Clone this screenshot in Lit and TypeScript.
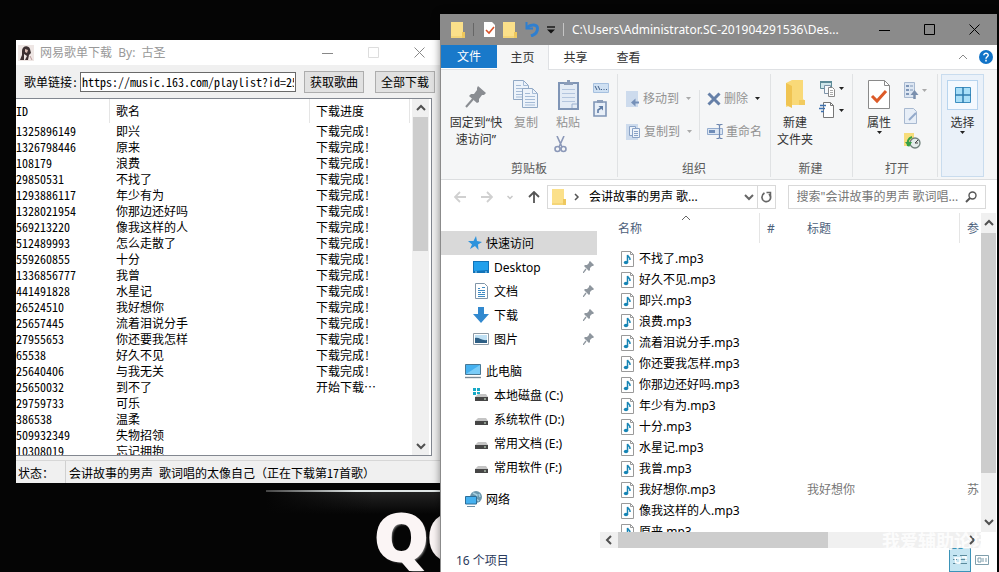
import { LitElement, html, css, svg, nothing } from "lit";
import { customElement } from "lit/decorators.js";
import { classMap } from "lit/directives/class-map.js";

const icon = (w: number, h: number, body: unknown) =>
  html`<svg width=${w} height=${h} viewBox="0 0 ${w} ${h}" fill="none" aria-hidden="true">${body}</svg>`;

const folder = () =>
  icon(14, 17, svg`<path d="M0 1H12V11L14 12V17H0Z" fill="#fbe08a"/><path d="M11 11h3v6h-3z" fill="#eec75c"/><path d="M0 16h14" stroke="#eecb66"/>`);
const folderBig = () =>
  icon(20, 28, svg`<path d="M1 3L7 0H18V19L20 21V25H7L1 27Z" fill="#f9d978"/><path d="M1 3L7 6V28L1 25Z" fill="#f0c452"/><path d="M14 20h6v5h-6z" fill="#f2cb60"/>`);
const checkDoc = () =>
  icon(11, 15, svg`<path d="M0 0H8L11 3V15H0Z" fill="#fff"/><path d="M2 8l3 3 5-6" stroke="#d9542b" stroke-width="1.600"/>`);
const undo = () =>
  icon(14, 15, svg`<path d="M1.500 0V6.500H8" stroke="#2f7fd0" stroke-width="2"/><path d="M2 5.500C6 2 12.500 2 12.500 6.500C12.500 11 9 13 6 14" stroke="#2f7fd0" stroke-width="3"/>`);
const customize = () =>
  icon(8, 8, svg`<path d="M0 1h8" stroke="#111" stroke-width="1.4"/><path d="M0 3.500H8L4 7.500Z" fill="#111"/>`);
const caret = (color = "#222") => icon(5, 3, svg`<path d="M0 0H5L2.500 3Z" fill=${color}/>`);
const minimize = () => icon(11, 11, svg`<path d="M0 6.500H11" stroke="currentColor"/>`);
const maximize = () => icon(11, 11, svg`<path d="M.5.500H10.500V10.500H.5Z" stroke="currentColor"/>`);
const closeX = () => icon(11, 11, svg`<path d="M.5.500L10.500 10.500M10.500.500L.5 10.500" stroke="currentColor"/>`);
const chevron = (dir: "up" | "down" | "left" | "right", color = "#505050", width = 2) => {
  const d = { up: "M1 7L5 3L9 7", down: "M1 3L5 7L9 3", left: "M7 1L3 5L7 9", right: "M3 1L7 5L3 9" }[dir];
  return icon(10, 10, svg`<path d=${d} stroke=${color} stroke-width=${width}/>`);
};
const smallChevron = (d: string, color: string) => icon(6, 8, svg`<path d=${d} stroke=${color} stroke-width="1.500"/>`);
const help = () =>
  icon(14, 14, svg`<circle cx="7" cy="7" r="7" fill="#1173c7"/><path d="M4.800 5.300C4.800 2.500 9.300 2.600 9.200 5.200C9.200 6.800 7 6.800 7 8.700M7 9.800V11.400" stroke="#fff" stroke-width="1.500"/>`);
const pinBig = () =>
  icon(22, 24, svg`<path d="M13 2L21 9L19 11L17 11L14 15L14 18L12 19L4 12L6 10L9 10L12 6L12 4Z" fill="#8a8d92"/><path d="M8 15L1 23" stroke="#8a8d92" stroke-width="2"/>`);
const pinSmall = () =>
  icon(11, 12, svg`<path d="M7 0L11 4L10 5H9L7 7V9L6 10L1 5L2 4H4L6 2V1Z" fill="#8e969e"/><path d="M3 8L0 12" stroke="#8e969e" stroke-width="1.300"/>`);
const page = (x: number, y: number) => svg`
  <path d="M${x + 0.5} ${y + 0.5}H${x + 10.5}L${x + 15.5} ${y + 5.5}V${y + 19.5}H${x + 0.5}Z" fill="#edf3fa" stroke="#91a8c4"/>
  <path d="M${x + 10.5} ${y + 0.5}V${y + 5.5}H${x + 15.5}M${x + 3} ${y + 5.5}h5M${x + 3} ${y + 8.5}h10M${x + 3} ${y + 11.5}h10M${x + 3} ${y + 14.5}h10M${x + 3} ${y + 17}h10" stroke="#a5bbd6"/>`;
const copyBig = () => icon(26, 28, svg`${page(0, 0)}${page(9, 8)}`);
const pasteBig = () =>
  icon(21, 30, svg`<path d="M1 3H20V29H1Z" fill="#e3ebf5" stroke="#7f95b6" stroke-width="2"/><path d="M6 5V2H9V0H12V2H15V5Z" fill="#8b9db9"/><path d="M4 9.500h13M4 13.500h13M4 17.500h13M4 21.500h13" stroke="#b3c5de"/><path d="M14 28v-4h5" stroke="#9db2d0"/>`);
const scissors = () =>
  icon(13, 17, svg`<path d="M3 0L8 11M10 0L5 11" stroke="#8b98b8" stroke-width="1.600"/><circle cx="3.500" cy="13" r="2.500" stroke="#8b98b8" stroke-width="1.600"/><circle cx="9.500" cy="13" r="2.500" stroke="#8b98b8" stroke-width="1.600"/>`);
const copyPath = () =>
  icon(16, 10, svg`<path d="M.5.500H15.500V9.500H.5Z" fill="#cfe0f2" stroke="#a6c0df"/><path d="M2 3l2 4M5 3l2 4M8 6.500h1M10.500 6.500h1M13 6.500h1" stroke="#3f5f88"/>`);
const pasteShortcut = () =>
  icon(14, 17, svg`<path d="M1 2H13V16H1Z" fill="#e8eff8" stroke="#7f95b6" stroke-width="1.600"/><path d="M4 0h6v3H4z" fill="#8b9db9"/><path d="M5 13V10L8 8" stroke="#5f7ca5" stroke-width="1.600"/><path d="M5.500 6H10V10.500Z" fill="#5f7ca5"/>`);
const moveTo = () =>
  icon(14, 16, svg`<path d="M0 0H12V16H0Z" fill="#cddbed"/><path d="M13 11.500H8" stroke="#7590b8" stroke-width="2"/><path d="M5 11.500L9.500 7.500V15.500Z" fill="#7590b8"/>`);
const copyTo = () =>
  icon(15, 16, svg`<path d="M0 0H12V16H0Z" fill="#cddbed"/><path d="M3.500 2.500h6v9h-6z" fill="#eef3fa" stroke="#89a2c6"/><path d="M6.500 4.500h7v9h-7z" fill="#eef3fa" stroke="#89a2c6"/><path d="M8 7.500h4M8 9.500h4M8 11.500h4" stroke="#89a2c6"/>`);
const deleteX = () => icon(14, 14, svg`<path d="M1.500 1.500L12.500 12.500M12.500 1.500L1.500 12.500" stroke="#6680a8" stroke-width="3"/>`);
const rename = () =>
  icon(16, 15, svg`<path d="M.5 4.500H15.500V10.500H.5Z" fill="#dce6f3" stroke="#93abcd"/><path d="M2 7.500h6" stroke="#6f8db8" stroke-width="3"/><path d="M12.500 1V14M9.500.500h2l1 1l1-1h2M9.500 14.500h2l1-1l1 1h2" stroke="#6f88b0" stroke-width="1.200"/>`);
const newItem = () =>
  icon(17, 17, svg`<path d="M1.500 1.500h11v7h-11z" fill="#cfe6ea" stroke="#5d8b98"/><path d="M1 2h12" stroke="#5d8b98" stroke-width="2"/><path d="M5.500 5.500h6v8h-6z" fill="#f5f8fb" stroke="#7d93a8"/><path d="M9.500 7.500h4l2 2v7h-6z" fill="#fff" stroke="#888"/><path d="M11 10.500h3M11 12.500h3M11 14.500h3" stroke="#aaa"/>`);
const easyAccess = () =>
  icon(17, 17, svg`<path d="M4.500.500H11.500L14.500 3.500V15.500H4.500Z" fill="#fff" stroke="#777"/><path d="M11.500.500V3.500H14.500" stroke="#777"/><path d="M1 3.500H7M0 6.500H6M2 9.500H5" stroke="#3e72b0" stroke-width="1.300"/>`);
const propertiesIcon = () =>
  icon(22, 29, svg`<path d="M.5.500H16.500L21.500 5.500V28.500H.5Z" fill="#fff" stroke="#8a8a8a"/><path d="M16.500.500V5.500H21.500" stroke="#8a8a8a"/><path d="M4 16l5 5L18 11" stroke="#dc5a28" stroke-width="3"/>`);
const openWith = () =>
  icon(15, 17, svg`<path d="M.5.500H10.500V15.500H.5Z" fill="#dde6f2" stroke="#a8b9d0"/><path d="M2 3h3v2H2zM2 7h3v2H2zM2 11h3v2H2z" fill="#7f97b8"/><path d="M6 4h3M6 8h3" stroke="#7f97b8"/><path d="M10.500 17V12" stroke="#7b90ae" stroke-width="2.500"/><path d="M6.500 13L10.500 8L14.500 13Z" fill="#7b90ae"/>`);
const editDoc = () =>
  icon(14, 16, svg`<path d="M.5.500H9.500L12.500 3.500V15.500H.5Z" fill="#e7eef7" stroke="#a8b9d0"/><path d="M5 12L12 5" stroke="#93a9ca" stroke-width="2"/>`);
const historyIcon = () =>
  icon(17, 16, svg`<path d="M0 0H10V13H0Z" fill="#f7dd7b"/><circle cx="11" cy="10" r="5" fill="#e4ecea" stroke="#70807c" stroke-width="1.300"/><path d="M11 10l3-3M11 10h3" stroke="#444"/><path d="M8 4C4 5 3 9 4 13" stroke="#36a046" stroke-width="2"/><path d="M1 9L8 9L5 14Z" fill="#36a046"/>`);
const selectIcon = () =>
  icon(16, 16, svg`<path d="M.5.500h15v15H.5z" fill="#a9dff8" stroke="#3e8fc0"/><path d="M8 0V16M0 8H16" stroke="#2f7daf" stroke-width="1.500"/>`);
const arrow = (d: string, color: string) => icon(12, 12, svg`<path d=${d} stroke=${color} stroke-width="1.800"/>`);
const refresh = () =>
  icon(11, 12, svg`<path d="M3.500 2C0 4 0 9 4 10.500C8.500 11.500 11.500 7 8 3" stroke="#666" stroke-width="1.700"/><path d="M5.500 1.500H9.500V5.500" stroke="#666" stroke-width="1.500"/>`);
const magnifier = () =>
  icon(12, 12, svg`<circle cx="7.500" cy="4.500" r="3.500" stroke="#555" stroke-width="1.400"/><path d="M5 7L1 11" stroke="#555" stroke-width="2"/>`);
const star = () => icon(14, 14, svg`<path d="M8 0L9 5L14 6L10 8.500L10.500 14L7 10L2 13L4 8.500L0 5H5.500Z" fill="#2d93dc"/>`);
const desktopIcon = () =>
  icon(16, 12, svg`<path d="M0 0H16V12H0Z" fill="#1173b8"/><path d="M1 1H15V9L1 10Z" fill="#22a0ec"/><path d="M2 11h2M12 11h2" stroke="#9fd6f7"/>`);
const docIcon = () =>
  icon(16, 16, svg`<path d="M2.500.500H11.500L14.500 3.500V15.500H2.500Z" fill="#fff" stroke="#8095a8"/><path d="M5 5.500h2M9 4.500h3M5 7.500h7M5 9.500h3M9 9.500h3M5 11.500h7M5 13.500h7" stroke="#3f8bc4"/>`);
const downIcon = () => icon(16, 16, svg`<path d="M5 0H11V7H16L8 16L0 7H5Z" fill="#3289cf"/>`);
const pictureIcon = () =>
  icon(16, 12, svg`<path d="M.5.500h15v11H.5z" fill="#fff" stroke="#8e9ba6"/><path d="M2 2h12v8H2z" fill="#bfe0f4"/><path d="M2 5C6 4 9 8 14 7V10H2Z" fill="#2e5f85"/>`);
const pcIcon = () =>
  icon(16, 15, svg`<path d="M.5.500h15v10H.5z" fill="#45b1f0" stroke="#4a7894"/><path d="M1 10L15 1V10Z" fill="#7accf8"/><path d="M0 13.500H16" stroke="#7a8a96" stroke-width="1.400"/>`);
const driveIcon = (os = false) =>
  icon(16, 14, svg`${os ? svg`<path d="M0 0h3v3H0zM4 0h3v3H4zM0 4h3v3H0zM4 4h3v2H4z" fill="#17a9c6"/>` : nothing}<path d="M5 6H13L15 9H2Z" fill="#c4c4c4"/><path d="M2 9H15V13H2Z" fill="#464646"/><path d="M11 11h2" stroke="#d6efd6"/>`);
const networkIcon = () =>
  icon(17, 16, svg`<circle cx="11" cy="6" r="6" fill="#6a96ac"/><path d="M8 2l4 2l-1 4l3 2M14 3l1 3" stroke="#a7cfe0" stroke-width="1.500"/><path d="M.5 5.500H11.500V13H.5Z" fill="#45b1f0" stroke="#2d6d97"/><path d="M2 15.500h8" stroke="#6c8ea4"/>`);
const musicFile = () =>
  icon(13, 16, svg`<path d="M.5.500H9.500L12.500 3.500V15.500H.5Z" fill="#fff" stroke="#9a9a9a"/><path d="M9.500.500V3.500H12.500" stroke="#9a9a9a"/><ellipse cx="5" cy="11.500" rx="2.200" ry="1.700" fill="#1785b5"/><path d="M6.500 11.500V4C7 6 9.500 6 9 9" stroke="#1785b5" stroke-width="1.500"/>`);
const portrait = () =>
  icon(16, 16, svg`<path d="M0 0H16V16H0Z" fill="#eee6e4"/><path d="M4 6C4 0 11 0 12 4L13 8L11 10L10 15H7L9 11L6 9L6 15H2L4 10Z" fill="#3c3032"/><path d="M7 4L10 5L9 8L7 7Z" fill="#d9bdb5"/><path d="M12 11l2 4" stroke="#b99"/>`);
const detailsView = () =>
  icon(18, 14, svg`<path d="M2 2.500h4M2 6.500h4M2 10.500h4M9 2.500h7M9 6.500h7M9 10.500h7" stroke="#5b8a9d"/><path d="M4 5h5v5H5zM11 4h4v4" stroke="#fff" stroke-width="1.500"/>`);
const tilesView = () =>
  icon(14, 10, svg`<path d="M.5.500h13v9H.5z" stroke="#7f9eac"/><path d="M3 3h3v4H3zM8 3v4M11 3v4" stroke="#7f9eac"/>`);

const songs: [string, string, string][] = [
  ["1325896149", "即兴", "下载完成!"],
  ["1326798446", "原来", "下载完成!"],
  ["108179", "浪费", "下载完成!"],
  ["29850531", "不找了", "下载完成!"],
  ["1293886117", "年少有为", "下载完成!"],
  ["1328021954", "你那边还好吗", "下载完成!"],
  ["569213220", "像我这样的人", "下载完成!"],
  ["512489993", "怎么走散了", "下载完成!"],
  ["559260855", "十分", "下载完成!"],
  ["1336856777", "我曾", "下载完成!"],
  ["441491828", "水星记", "下载完成!"],
  ["26524510", "我好想你", "下载完成!"],
  ["25657445", "流着泪说分手", "下载完成!"],
  ["27955653", "你还要我怎样", "下载完成!"],
  ["65538", "好久不见", "下载完成!"],
  ["25640406", "与我无关", "下载完成!"],
  ["25650032", "到不了", "开始下载…"],
  ["29759733", "可乐", ""],
  ["386538", "温柔", ""],
  ["509932349", "失物招领", ""],
  ["10308019", "忘记拥抱", ""],
];

const files: [string, string, string][] = [
  ["不找了.mp3", "", ""],
  ["好久不见.mp3", "", ""],
  ["即兴.mp3", "", ""],
  ["浪费.mp3", "", ""],
  ["流着泪说分手.mp3", "", ""],
  ["你还要我怎样.mp3", "", ""],
  ["你那边还好吗.mp3", "", ""],
  ["年少有为.mp3", "", ""],
  ["十分.mp3", "", ""],
  ["水星记.mp3", "", ""],
  ["我曾.mp3", "", ""],
  ["我好想你.mp3", "我好想你", "苏"],
  ["像我这样的人.mp3", "", ""],
  ["原来.mp3", "", ""],
];

const base = css`
  * {
    box-sizing: border-box;
  }
  button {
    font: inherit;
    color: inherit;
    background: none;
    border: 0;
    padding: 0;
    margin: 0;
    display: flex;
    align-items: center;
    justify-content: center;
    white-space: nowrap;
  }
  input {
    font: inherit;
    margin: 0;
    min-width: 0;
  }
  svg {
    display: block;
    flex: none;
  }
  table {
    border-collapse: separate;
    border-spacing: 0;
    table-layout: fixed;
  }
  th,
  td {
    padding: 0;
    font-weight: 400;
    text-align: left;
    white-space: nowrap;
    overflow: hidden;
  }
`;

@customElement("playlist-window")
export class PlaylistWindow extends LitElement {
  static styles = [
    base,
    css`
      :host {
        display: flex;
        flex-direction: column;
        background: #f0f0f0;
        color: #000;
        font: 12px/16px "Noto Sans Mono CJK SC", "Noto Sans CJK SC", "Liberation Mono", monospace;
      }
      .title {
        display: flex;
        align-items: center;
        height: 25px;
        padding-left: 2px;
        background: #fff;
        color: #999;
        font-family: "Noto Sans", "Noto Sans CJK SC", sans-serif;
      }
      .title span {
        flex: 1;
        padding-left: 6px;
        white-space: pre;
      }
      .title button {
        width: 46px;
        height: 24px;
        color: #888;
      }
      .title .off {
        color: #ddd;
      }
      .form {
        display: flex;
        align-items: center;
        height: 33px;
        padding: 0 7px 0 8px;
      }
      .form input {
        flex: 1;
        height: 20px;
        margin-left: 2px;
        padding: 0 1px;
        border: 1px solid #6a6a6a;
        background: #fff;
      }
      .form button {
        width: 60px;
        height: 22px;
        margin-left: 8px;
        border: 1px solid #adadad;
        background: #e1e1e1;
      }
      .form button + button {
        margin-left: 11px;
      }
      .list {
        flex: 1;
        min-height: 0;
        display: flex;
        margin-right: 10px;
        border: solid #828790;
        border-width: 1px 1px 1px 0;
        background: #fff;
        overflow: hidden;
      }
      .rows {
        flex: 1;
        overflow: hidden;
      }
      .id {
        width: 94px;
      }
      .name {
        width: 200px;
      }
      .state {
        width: 100px;
      }
      th {
        height: 24px;
        border-right: 1px solid #e5e5e5;
      }
      td {
        height: 16px;
      }
      th + th,
      td + td {
        padding-left: 6px;
      }
      .scroll {
        width: 17px;
        display: flex;
        flex-direction: column;
        background: #f0f0f0;
        margin-right: 2px;
      }
      .scroll button {
        height: 18px;
      }
      .track {
        flex: 1;
      }
      .thumb {
        height: 42%;
        margin: 0 1px;
        background: #cdcdcd;
      }
      .status {
        display: flex;
        height: 23px;
        margin-top: 4px;
        border-top: 1px solid #d7d7d7;
        line-height: 23px;
        white-space: pre;
      }
      .status span:first-child {
        width: 50px;
        padding-left: 2px;
        border-right: 1px solid #d0d0d0;
      }
      .status span:last-child {
        padding-left: 3px;
      }
    `,
  ];

  render() {
    return html`
      <div class="title">
        ${portrait()}<span>网易歌单下载  By:  古圣</span>
        <button aria-label="最小化">${minimize()}</button>
        <button class="off" aria-label="最大化" disabled>${maximize()}</button>
        <button aria-label="关闭">${closeX()}</button>
      </div>
      <div class="form">
        <label for="url">歌单链接:</label>
        <input id="url" .value=${"https://music.163.com/playlist?id=2585"} />
        <button>获取歌曲</button>
        <button>全部下载</button>
      </div>
      <div class="list">
        <div class="rows">
          <table>
            <colgroup><col class="id" /><col class="name" /><col class="state" /></colgroup>
            <thead><tr><th>ID</th><th>歌名</th><th>下载进度</th></tr></thead>
            <tbody>
              ${songs.map((s) => html`<tr>${s.map((v) => html`<td>${v}</td>`)}</tr>`)}
            </tbody>
          </table>
        </div>
        <div class="scroll">
          <button aria-label="向上滚动">${chevron("up")}</button>
          <div class="track"><div class="thumb"></div></div>
          <button aria-label="向下滚动">${chevron("down")}</button>
        </div>
      </div>
      <div class="status"><span>状态：</span><span>会讲故事的男声 歌词唱的太像自己（正在下载第17首歌）</span></div>
    `;
  }
}

@customElement("explorer-window")
export class ExplorerWindow extends LitElement {
  static styles = [
    base,
    css`
      :host {
        display: flex;
        flex-direction: column;
        background: #fff;
        color: #1a1a1a;
        border-left: 1px solid #8b8b8b;
        box-shadow: 0 0 8px rgba(0, 0, 0, 0.45);
        font: 12px/17px "Noto Sans", "Noto Sans CJK SC", sans-serif;
        overflow: hidden;
      }
      a {
        color: inherit;
        text-decoration: none;
      }
      .title {
        display: flex;
        align-items: center;
        gap: 8px;
        height: 31px;
        flex: none;
        padding-left: 10px;
        background: #8b8b8b;
        color: #fff;
      }
      .bar {
        width: 1px;
        height: 13px;
        background: #c5c5c5;
      }
      .bar.dark {
        margin-right: 2px;
        background: #666;
      }
      .title .path {
        flex: 1;
        min-width: 0;
        white-space: nowrap;
      }
      .sys {
        display: flex;
        color: #000;
      }
      .sys button {
        width: 45px;
        height: 30px;
      }
      .tabs {
        display: flex;
        height: 25px;
        flex: none;
        border-bottom: 1px solid #dfe1e4;
      }
      .tabs button {
        width: 53px;
        color: #333;
      }
      .tabs .file {
        width: 56px;
        height: 23px;
        background: #1979ca;
        color: #fff;
      }
      .tabs .home {
        width: 52px;
        height: 25px;
        background: #f5f6f7;
        border-right: 1px solid #dfe1e4;
      }
      .tabs .right {
        margin-left: auto;
        display: flex;
        align-items: center;
        gap: 11px;
        padding-right: 4px;
      }
      .tabs .right button {
        width: auto;
      }
      .ribbon {
        display: flex;
        flex: none;
        height: 110px;
        background: #f5f6f7;
        border-bottom: 1px solid #dcdee0;
        color: #444;
      }
      .group {
        display: flex;
        flex-direction: column;
        justify-content: space-between;
        margin: 4px 0 2px;
        padding: 6px 8px 0;
        border-right: 1px solid #e0e2e4;
      }
      .group footer {
        text-align: center;
        color: #5a5a5a;
      }
      .tools {
        display: flex;
      }
      .big {
        flex-direction: column;
        justify-content: flex-start;
        color: #333;
        white-space: pre-line;
      }
      .big .pic {
        height: 34px;
        display: flex;
        align-items: flex-start;
      }
      .big.off,
      .line.off {
        color: #929292;
      }
      .clip .tools {
        gap: 14px;
      }
      .clip .big {
        width: 28px;
      }
      .clip .wide {
        width: 54px;
        margin-right: -5px;
      }
      .wide .pic {
        padding-top: 4px;
      }
      .stack {
        display: flex;
        flex-direction: column;
        align-items: flex-start;
      }
      .clip .stack {
        gap: 5px;
      }
      .clip .side {
        padding-top: 3px;
        gap: 7px;
        margin-left: -3px;
      }
      .org .tools {
        padding-top: 10px;
      }
      .org .stack {
        gap: 16px;
      }
      .org .stack + .stack {
        border-left: 1px solid #e0e2e4;
        margin-left: 7px;
        padding-left: 7px;
      }
      .line {
        gap: 3px;
      }
      .line .drop {
        margin-left: 4px;
      }
      .make .tools {
        gap: 6px;
      }
      .make .big {
        width: 36px;
      }
      .group.make {
        padding-left: 6px;
        padding-right: 8px;
      }
      .small {
        gap: 3px;
      }
      .make .stack {
        gap: 5px;
      }
      .group.open {
        padding-left: 14px;
        padding-right: 10px;
      }
      .open .tools {
        gap: 13px;
      }
      .open .big {
        width: 24px;
      }
      .open .stack {
        gap: 9px;
        padding-top: 2px;
      }
      .pick {
        width: 43px;
        margin: 4px 0 2px 3px;
        padding-top: 5px;
        border: 1px solid #c9dcee;
        background: #eaf1f9;
      }
      .pick .pic {
        height: 30px;
        width: 31px;
        margin-bottom: 4px;
        align-items: center;
        justify-content: center;
        border: 1px solid #b7d4ee;
        background: #f4f9fe;
      }
      .nav {
        display: flex;
        align-items: center;
        flex: none;
        height: 33px;
        padding: 0 11px 0 13px;
      }
      .nav .arrows {
        display: flex;
        align-items: center;
        justify-content: space-between;
        width: 86px;
        margin-right: 7px;
      }
      .address,
      .search {
        display: flex;
        align-items: center;
        height: 24px;
        min-width: 0;
        border: 1px solid #d9d9d9;
      }
      .address {
        flex: 1 1 228px;
        padding-left: 4px;
        color: #000;
      }
      .address .crumb {
        flex: 1;
        padding-left: 9px;
        white-space: nowrap;
      }
      .address .crumbArrow {
        margin-left: 8px;
      }
      .address .reload {
        width: 18px;
        height: 22px;
        margin-left: 3px;
        border-left: 1px solid #d9d9d9;
      }
      .search {
        flex: 1 1 198px;
        margin-left: 12px;
        padding: 0 8px;
      }
      .search input {
        flex: 1;
        border: 0;
        padding: 0;
        outline: 0;
        background: none;
      }
      .search input::placeholder {
        color: #777;
      }
      .main {
        flex: 1;
        min-height: 0;
        display: flex;
      }
      .tree {
        width: 156px;
        padding-top: 18px;
        margin-right: 3px;
        color: #000;
      }
      .tree a {
        display: flex;
        align-items: center;
        height: 24px;
        padding: 0 3px 0 24px;
      }
      .tree a.child {
        padding-left: 32px;
      }
      .tree a.gap {
        margin-top: 8px;
      }
      .tree a.current {
        background: #d9d9d9;
      }
      .tree .glyph {
        width: 21px;
        flex: none;
      }
      .tree a.current .glyph {
        padding-left: 3px;
      }
      .tree .label {
        flex: 1;
      }
      .content {
        flex: 1;
        min-width: 0;
        display: flex;
        flex-direction: column;
      }
      .pane {
        flex: 1;
        min-height: 0;
        display: flex;
        padding-right: 1px;
      }
      .files {
        flex: 1;
        min-width: 0;
        overflow: hidden;
      }
      .files table {
        width: 100%;
      }
      .cName,
      .cTitle {
        width: 160px;
      }
      .cNum {
        width: 40px;
      }
      th {
        height: 30px;
        padding: 0 0 0 7px;
        color: #4c607a;
        border-right: 1px solid #e5e5e5;
      }
      th.number,
      th:last-child {
        border-right-color: #fff;
      }
      th.first {
        padding-left: 18px;
        position: relative;
      }
      .sort {
        position: absolute;
        top: 0;
        left: 81px;
      }
      .spacer td {
        height: 5px;
      }
      td {
        height: 21px;
        padding: 0 0 0 7px;
        color: #777;
      }
      td.fileName {
        padding-left: 21px;
        color: #000;
      }
      .fileName div {
        display: flex;
        align-items: center;
        gap: 5px;
      }
      .vscroll {
        width: 15px;
        display: flex;
        flex-direction: column;
        background: #f0f0f0;
      }
      .vscroll button {
        height: 20px;
      }
      .vscroll .track {
        flex: 1;
      }
      .vscroll .thumb {
        height: 86%;
        background: #cdcdcd;
      }
      .hscroll {
        display: flex;
        height: 16px;
        flex: none;
        margin-right: 16px;
        background: #f0f0f0;
      }
      .hscroll button {
        width: 18px;
      }
      .hscroll .track {
        flex: 1;
        display: flex;
      }
      .hscroll .thumb {
        width: 61%;
        background: #cdcdcd;
      }
      .status {
        display: flex;
        align-items: center;
        justify-content: flex-end;
        flex: none;
        height: 24px;
        padding: 0 4px 0 15px;
        color: #2a3a5c;
      }
      .status span {
        margin-right: auto;
      }
      .status button {
        width: 22px;
        height: 24px;
      }
      .status .on {
        border: 1px solid #3b93b8;
        background: #c5e5f2;
      }
    `,
  ];

  private treeItem(label: string, glyph: unknown, opts: { child?: boolean; gap?: boolean; current?: boolean; pin?: boolean } = {}) {
    const classes = { child: !!opts.child, gap: !!opts.gap, current: !!opts.current };
    return html`<a href="#" class=${classMap(classes)}
      ><span class="glyph">${glyph}</span><span class="label">${label}</span>${opts.pin ? pinSmall() : nothing}</a
    >`;
  }

  render() {
    return html`
      <header class="title">
        ${folder()}
        <i class="bar dark"></i>
        ${checkDoc()}${folder()}${undo()}${customize()}
        <i class="bar"></i>
        <span class="path">C:\\Users\\Administrator.SC-201904291536\\Des...</span>
        <div class="sys">
          <button aria-label="最小化">${minimize()}</button>
          <button aria-label="最大化">${maximize()}</button>
          <button aria-label="关闭">${closeX()}</button>
        </div>
      </header>
      <div class="tabs">
        <button class="file">文件</button>
        <button class="home">主页</button>
        <button>共享</button>
        <button>查看</button>
        <div class="right">
          <button aria-label="折叠功能区">${chevron("up", "#888", 1)}</button>
          <button aria-label="帮助">${help()}</button>
        </div>
      </div>
      <div class="ribbon">
        <section class="group clip">
          <div class="tools">
            <button class="big wide"><span class="pic">${pinBig()}</span>固定到“快<br />速访问”</button>
            <button class="big off"><span class="pic">${copyBig()}</span>复制</button>
            <div class="stack">
              <button class="big off"><span class="pic">${pasteBig()}</span>粘贴</button>
              <button aria-label="剪切">${scissors()}</button>
            </div>
            <div class="stack side">
              <button aria-label="复制路径">${copyPath()}</button>
              <button aria-label="粘贴快捷方式">${pasteShortcut()}</button>
            </div>
          </div>
          <footer>剪贴板</footer>
        </section>
        <section class="group org">
          <div class="tools">
            <div class="stack">
              <button class="line off">${moveTo()}移动到<span class="drop">${caret("#aaa")}</span></button>
              <button class="line off">${copyTo()}复制到<span class="drop">${caret("#aaa")}</span></button>
            </div>
            <div class="stack">
              <button class="line off">${deleteX()}删除<span class="drop">${caret()}</span></button>
              <button class="line off">${rename()}重命名</button>
            </div>
          </div>
          <footer>组织</footer>
        </section>
        <section class="group make">
          <div class="tools">
            <button class="big"><span class="pic">${folderBig()}</span>新建<br />文件夹</button>
            <div class="stack">
              <button class="small" aria-label="新建项目">${newItem()}${caret()}</button>
              <button class="small" aria-label="轻松访问">${easyAccess()}${caret()}</button>
            </div>
          </div>
          <footer>新建</footer>
        </section>
        <section class="group open">
          <div class="tools">
            <button class="big"><span class="pic">${propertiesIcon()}</span>属性${caret()}</button>
            <div class="stack">
              <button class="small" aria-label="打开">${openWith()}${caret("#aaa")}</button>
              <button aria-label="编辑">${editDoc()}</button>
              <button aria-label="历史记录">${historyIcon()}</button>
            </div>
          </div>
          <footer>打开</footer>
        </section>
        <button class="big pick"><span class="pic">${selectIcon()}</span>选择${caret()}</button>
      </div>
      <nav class="nav">
        <div class="arrows">
          <button aria-label="后退">${arrow("M12 6H1M6 1L1 6L6 11", "#d0d0d0")}</button>
          <button aria-label="前进">${arrow("M0 6H11M6 1L11 6L6 11", "#d0d0d0")}</button>
          <button aria-label="最近浏览的位置">${smallChevron("M.5 3L3 5.500L5.500 3", "#c8c8c8")}</button>
          <button aria-label="向上">${arrow("M6 12V1M1 6L6 1L11 6", "#555")}</button>
        </div>
        <div class="address">
          ${folder()}<span class="crumbArrow">${smallChevron("M1 1L4 4L1 7", "#555")}</span>
          <span class="crumb">会讲故事的男声 歌...</span>
          <button aria-label="以前的位置">${chevron("down", "#666")}</button>
          <button class="reload" aria-label="刷新">${refresh()}</button>
        </div>
        <div class="search">
          <input aria-label="搜索" placeholder='搜索"会讲故事的男声 歌词唱...' />
          ${magnifier()}
        </div>
      </nav>
      <div class="main">
        <div class="tree">
          ${this.treeItem("快速访问", star(), { current: true })}
          ${this.treeItem("Desktop", desktopIcon(), { child: true, pin: true })}
          ${this.treeItem("文档", docIcon(), { child: true, pin: true })}
          ${this.treeItem("下载", downIcon(), { child: true, pin: true })}
          ${this.treeItem("图片", pictureIcon(), { child: true, pin: true })}
          ${this.treeItem("此电脑", pcIcon(), { gap: true })}
          ${this.treeItem("本地磁盘 (C:)", driveIcon(true), { child: true })}
          ${this.treeItem("系统软件 (D:)", driveIcon(), { child: true })}
          ${this.treeItem("常用文档 (E:)", driveIcon(), { child: true })}
          ${this.treeItem("常用软件 (F:)", driveIcon(), { child: true })}
          ${this.treeItem("网络", networkIcon(), { gap: true })}
        </div>
        <div class="content">
          <div class="pane">
            <div class="files">
              <table>
                <colgroup><col class="cName" /><col class="cNum" /><col class="cTitle" /><col /></colgroup>
                <thead>
                  <tr>
                    <th class="first">名称<span class="sort">${chevron("up", "#666", 1)}</span></th>
                    <th class="number">#</th><th>标题</th><th>参</th>
                  </tr>
                </thead>
                <tbody>
                  <tr class="spacer"><td colspan="4"></td></tr>
                  ${files.map(
                    ([name, title, artist]) => html`<tr>
                      <td class="fileName"><div>${musicFile()}${name}</div></td>
                      <td></td><td>${title}</td><td>${artist}</td>
                    </tr>`
                  )}
                </tbody>
              </table>
            </div>
            <div class="vscroll">
              <button aria-label="向上滚动">${chevron("up")}</button>
              <div class="track"><div class="thumb"></div></div>
              <button aria-label="向下滚动">${chevron("down")}</button>
            </div>
          </div>
          <div class="hscroll">
            <button aria-label="向左滚动">${chevron("left")}</button>
            <div class="track"><div class="thumb"></div></div>
            <button aria-label="向右滚动">${chevron("right")}</button>
          </div>
        </div>
      </div>
      <footer class="status">
        <span>16 个项目</span>
        <button class="on" aria-label="详细信息">${detailsView()}</button>
        <button aria-label="大图标">${tilesView()}</button>
      </footer>
    `;
  }
}

@customElement("app-root")
export class AppRoot extends LitElement {
  static styles = css`
    :host {
      display: block;
      position: relative;
      height: 100vh;
      overflow: hidden;
      background: #050505;
    }
    playlist-window {
      position: absolute;
      left: 16px;
      top: 40px;
      bottom: 89px;
      width: 426px;
    }
    explorer-window {
      position: absolute;
      left: 440px;
      right: 2px;
      top: 14px;
      bottom: 0;
    }
    .glow {
      position: absolute;
      left: 266px;
      bottom: 58px;
      width: 180px;
      height: 24px;
      background:
        linear-gradient(90deg, #444, #dfe5e5 50%) top / 100% 2px no-repeat,
        linear-gradient(90deg, #050505, transparent 60%),
        linear-gradient(#262626, #050505);
    }
    .logo {
      position: absolute;
      left: 375px;
      bottom: 8px;
      font: bold 62px/50px "DejaVu Sans", sans-serif;
      color: #fbf5f5;
      -webkit-text-stroke: 3px #fbf5f5;
      text-shadow: 2px 2px 2px #777;
    }
    .watermark {
      position: absolute;
      right: 9px;
      bottom: 21px;
      font: bold 18px/22px "Noto Sans CJK SC", sans-serif;
      color: rgba(255, 255, 255, 0.85);
      white-space: nowrap;
    }
  `;

  render() {
    return html`
      <div class="glow"></div>
      <div class="logo">QQ</div>
      <playlist-window></playlist-window>
      <explorer-window></explorer-window>
      <div class="watermark">我爱辅助论坛</div>
    `;
  }
}
